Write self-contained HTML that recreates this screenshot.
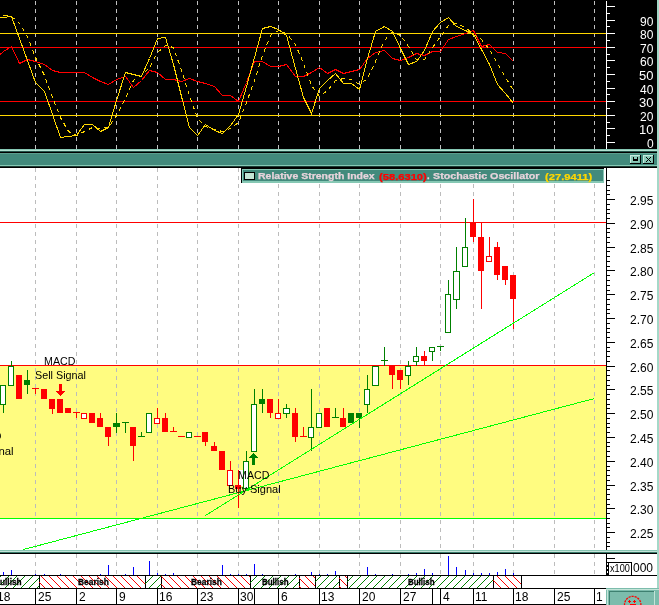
<!DOCTYPE html>
<html><head><meta charset="utf-8"><style>
html,body{margin:0;padding:0;background:#fff;overflow:hidden;}
svg{display:block;will-change:transform;font-family:"Liberation Sans", sans-serif;}
</style></head><body>
<svg width="659" height="605" viewBox="0 0 659 605" shape-rendering="crispEdges">
<rect x="0" y="0" width="659" height="149" fill="#000"/><line x1="35.5" y1="1" x2="35.5" y2="149" stroke="#c0c0c0" stroke-dasharray="4 4"/><line x1="76.5" y1="1" x2="76.5" y2="149" stroke="#c0c0c0" stroke-dasharray="4 4"/><line x1="116.5" y1="1" x2="116.5" y2="149" stroke="#c0c0c0" stroke-dasharray="4 4"/><line x1="157.5" y1="1" x2="157.5" y2="149" stroke="#c0c0c0" stroke-dasharray="4 4"/><line x1="197.5" y1="1" x2="197.5" y2="149" stroke="#c0c0c0" stroke-dasharray="4 4"/><line x1="238.5" y1="1" x2="238.5" y2="149" stroke="#c0c0c0" stroke-dasharray="4 4"/><line x1="278.5" y1="1" x2="278.5" y2="149" stroke="#c0c0c0" stroke-dasharray="4 4"/><line x1="319.5" y1="1" x2="319.5" y2="149" stroke="#c0c0c0" stroke-dasharray="4 4"/><line x1="359.5" y1="1" x2="359.5" y2="149" stroke="#c0c0c0" stroke-dasharray="4 4"/><line x1="400.5" y1="1" x2="400.5" y2="149" stroke="#c0c0c0" stroke-dasharray="4 4"/><line x1="440.5" y1="1" x2="440.5" y2="149" stroke="#c0c0c0" stroke-dasharray="4 4"/><line x1="473.5" y1="1" x2="473.5" y2="149" stroke="#c0c0c0" stroke-dasharray="4 4"/><line x1="513.5" y1="1" x2="513.5" y2="149" stroke="#c0c0c0" stroke-dasharray="4 4"/><line x1="554.5" y1="1" x2="554.5" y2="149" stroke="#c0c0c0" stroke-dasharray="4 4"/><line x1="594.5" y1="1" x2="594.5" y2="149" stroke="#c0c0c0" stroke-dasharray="4 4"/><rect x="0" y="33" width="606" height="1" fill="#ffd700"/><rect x="0" y="115" width="606" height="1" fill="#ffd700"/><rect x="0" y="47" width="606" height="1" fill="#ff0000"/><rect x="0" y="101" width="606" height="1" fill="#ff0000"/><rect x="606" y="1" width="1" height="148" fill="#fff"/><rect x="607" y="142" width="8" height="1" fill="#fff"/><rect x="607" y="135" width="3" height="1" fill="#fff"/><rect x="607" y="128" width="8" height="1" fill="#fff"/><rect x="607" y="122" width="3" height="1" fill="#fff"/><rect x="607" y="115" width="8" height="1" fill="#fff"/><rect x="607" y="108" width="3" height="1" fill="#fff"/><rect x="607" y="101" width="8" height="1" fill="#fff"/><rect x="607" y="94" width="3" height="1" fill="#fff"/><rect x="607" y="88" width="8" height="1" fill="#fff"/><rect x="607" y="81" width="3" height="1" fill="#fff"/><rect x="607" y="74" width="8" height="1" fill="#fff"/><rect x="607" y="67" width="3" height="1" fill="#fff"/><rect x="607" y="60" width="8" height="1" fill="#fff"/><rect x="607" y="54" width="3" height="1" fill="#fff"/><rect x="607" y="47" width="8" height="1" fill="#fff"/><rect x="607" y="40" width="3" height="1" fill="#fff"/><rect x="607" y="33" width="8" height="1" fill="#fff"/><rect x="607" y="26" width="3" height="1" fill="#fff"/><rect x="607" y="20" width="8" height="1" fill="#fff"/><rect x="607" y="13" width="3" height="1" fill="#fff"/><rect x="607" y="6" width="8" height="1" fill="#fff"/><text x="647.00" y="148" font-size="12" font-weight="normal" fill="#fff" textLength="6.69" lengthAdjust="spacingAndGlyphs">0</text><text x="638.92" y="134" font-size="12" font-weight="normal" fill="#fff" textLength="14.47" lengthAdjust="spacingAndGlyphs">10</text><text x="640.00" y="121" font-size="12" font-weight="normal" fill="#fff" textLength="13.36" lengthAdjust="spacingAndGlyphs">20</text><text x="638.92" y="107" font-size="12" font-weight="normal" fill="#fff" textLength="14.47" lengthAdjust="spacingAndGlyphs">30</text><text x="640.00" y="94" font-size="12" font-weight="normal" fill="#fff" textLength="13.36" lengthAdjust="spacingAndGlyphs">40</text><text x="638.92" y="80" font-size="12" font-weight="normal" fill="#fff" textLength="14.47" lengthAdjust="spacingAndGlyphs">50</text><text x="640.00" y="66" font-size="12" font-weight="normal" fill="#fff" textLength="13.36" lengthAdjust="spacingAndGlyphs">60</text><text x="640.00" y="53" font-size="12" font-weight="normal" fill="#fff" textLength="13.36" lengthAdjust="spacingAndGlyphs">70</text><text x="640.00" y="39" font-size="12" font-weight="normal" fill="#fff" textLength="13.36" lengthAdjust="spacingAndGlyphs">80</text><text x="640.00" y="26" font-size="12" font-weight="normal" fill="#fff" textLength="13.36" lengthAdjust="spacingAndGlyphs">90</text><polyline points="-4.5,58.5 3.5,51.5 11.5,46.5 19.5,63.5 27.5,59.5 35.5,61.5 44.5,64.5 52.5,70.5 60.5,72.5 68.5,72.5 76.5,72.5 84.5,72.5 92.5,77.5 100.5,81.5 108.5,84.5 116.5,79.5 125.5,76.5 133.5,87.5 141.5,80.5 149.5,70.5 157.5,72.5 165.5,79.5 173.5,79.5 181.5,81.5 189.5,78.5 197.5,81.5 205.5,83.5 214.5,86.5 222.5,95.5 230.5,95.5 238.5,101.5 246.5,82.5 254.5,61.5 262.5,61.5 270.5,66.5 278.5,66.5 286.5,64.5 295.5,76.5 303.5,76.5 311.5,72.5 319.5,67.5 327.5,73.5 335.5,69.5 343.5,73.5 351.5,71.5 359.5,69.5 367.5,58.5 375.5,52.5 384.5,50.5 392.5,58.5 400.5,60.5 408.5,57.5 416.5,53.5 424.5,55.5 432.5,51.5 440.5,51.5 448.5,39.5 456.5,36.5 465.5,33.5 473.5,30.5 481.5,46.5 489.5,44.5 497.5,52.5 505.5,53.5 513.5,61.5" fill="none" stroke="#ff0000" stroke-width="1"/><polyline points="-4.5,15.5 3.5,15.5 11.5,16.5 19.5,23.5 27.5,36.5 35.5,57.5 44.5,75.5 52.5,97.5 60.5,117.5 68.5,131.5 76.5,135.5 84.5,131.5 92.5,127.5 100.5,128.5 108.5,127.5 116.5,115.5 125.5,98.5 133.5,80.5 141.5,75.5 149.5,67.5 157.5,52.5 165.5,45.5 173.5,47.5 181.5,70.5 189.5,95.5 197.5,118.5 205.5,126.5 214.5,129.5 222.5,131.5 230.5,128.5 238.5,122.5 246.5,102.5 254.5,80.5 262.5,55.5 270.5,35.5 278.5,30.5 286.5,33.5 295.5,44.5 303.5,63.5 311.5,85.5 319.5,96.5 327.5,90.5 335.5,80.5 343.5,78.5 351.5,79.5 359.5,84.5 367.5,78.5 375.5,61.5 384.5,40.5 392.5,31.5 400.5,35.5 408.5,46.5 416.5,59.5 424.5,59.5 432.5,47.5 440.5,36.5 448.5,25.5 456.5,23.5 465.5,27.5 473.5,34.5 481.5,39.5 489.5,49.5 497.5,63.5 505.5,77.5 513.5,90.5" fill="none" stroke="#ffd700" stroke-width="1" stroke-dasharray="4 4"/><polyline points="-4.5,17.5 3.5,17.5 11.5,16.5 19.5,38.5 27.5,60.5 35.5,82.5 44.5,91.5 52.5,114.5 60.5,137.5 68.5,136.5 76.5,135.5 84.5,124.5 92.5,124.5 100.5,131.5 108.5,127.5 116.5,100.5 125.5,72.5 133.5,74.5 141.5,76.5 149.5,58.5 157.5,38.5 165.5,37.5 173.5,64.5 181.5,96.5 189.5,127.5 197.5,135.5 205.5,124.5 214.5,130.5 222.5,133.5 230.5,125.5 238.5,114.5 246.5,86.5 254.5,57.5 262.5,28.5 270.5,26.5 278.5,29.5 286.5,35.5 295.5,68.5 303.5,97.5 311.5,113.5 319.5,88.5 327.5,80.5 335.5,73.5 343.5,83.5 351.5,83.5 359.5,89.5 367.5,58.5 375.5,31.5 384.5,26.5 392.5,31.5 400.5,48.5 408.5,64.5 416.5,61.5 424.5,50.5 432.5,31.5 440.5,22.5 448.5,17.5 456.5,26.5 465.5,30.5 473.5,34.5 481.5,49.5 489.5,64.5 497.5,84.5 505.5,93.5 513.5,103.5" fill="none" stroke="#ffd700" stroke-width="1"/><rect x="0" y="149" width="659" height="1" fill="#86c8b4"/><rect x="0" y="150" width="659" height="1" fill="#b4e2d2"/><rect x="0" y="151" width="659" height="1" fill="#24544a"/><rect x="0" y="152" width="659" height="1" fill="#000"/><rect x="0" y="153" width="659" height="1" fill="#5c9e8e"/><rect x="0" y="154" width="659" height="11" fill="#428a7c"/><rect x="0" y="165" width="659" height="1" fill="#86c8b4"/><rect x="0" y="166" width="659" height="1" fill="#1c3c34"/><rect x="0" y="167" width="659" height="1" fill="#000"/><rect x="630" y="155" width="11" height="9" fill="#000"/><rect x="630" y="155" width="10" height="8" fill="#c8ece0"/><rect x="631" y="156" width="9" height="7" fill="#7cbcac"/><rect x="631" y="156" width="8" height="6" fill="#8ccab8"/><rect x="643" y="155" width="11" height="9" fill="#000"/><rect x="643" y="155" width="10" height="8" fill="#c8ece0"/><rect x="644" y="156" width="9" height="7" fill="#7cbcac"/><rect x="644" y="156" width="8" height="6" fill="#8ccab8"/><rect x="633" y="157" width="1" height="4" fill="#000"/><rect x="637" y="157" width="1" height="4" fill="#000"/><rect x="633" y="160" width="5" height="1" fill="#000"/><rect x="634" y="159" width="3" height="1" fill="#000"/><path d="M646 157 L651 162 M651 157 L646 162" stroke="#000" stroke-width="1" fill="none" shape-rendering="geometricPrecision"/><rect x="0" y="168" width="657" height="382" fill="#fff"/><rect x="0" y="366" width="606" height="152" fill="#fffc80"/><line x1="35.5" y1="168" x2="35.5" y2="550" stroke="#bcbcbc" stroke-dasharray="4 4"/><line x1="76.5" y1="168" x2="76.5" y2="550" stroke="#bcbcbc" stroke-dasharray="4 4"/><line x1="116.5" y1="168" x2="116.5" y2="550" stroke="#bcbcbc" stroke-dasharray="4 4"/><line x1="157.5" y1="168" x2="157.5" y2="550" stroke="#bcbcbc" stroke-dasharray="4 4"/><line x1="197.5" y1="168" x2="197.5" y2="550" stroke="#bcbcbc" stroke-dasharray="4 4"/><line x1="238.5" y1="168" x2="238.5" y2="550" stroke="#bcbcbc" stroke-dasharray="4 4"/><line x1="278.5" y1="168" x2="278.5" y2="550" stroke="#bcbcbc" stroke-dasharray="4 4"/><line x1="319.5" y1="168" x2="319.5" y2="550" stroke="#bcbcbc" stroke-dasharray="4 4"/><line x1="359.5" y1="168" x2="359.5" y2="550" stroke="#bcbcbc" stroke-dasharray="4 4"/><line x1="400.5" y1="168" x2="400.5" y2="550" stroke="#bcbcbc" stroke-dasharray="4 4"/><line x1="440.5" y1="168" x2="440.5" y2="550" stroke="#bcbcbc" stroke-dasharray="4 4"/><line x1="473.5" y1="168" x2="473.5" y2="550" stroke="#bcbcbc" stroke-dasharray="4 4"/><line x1="513.5" y1="168" x2="513.5" y2="550" stroke="#bcbcbc" stroke-dasharray="4 4"/><line x1="554.5" y1="168" x2="554.5" y2="550" stroke="#bcbcbc" stroke-dasharray="4 4"/><line x1="594.5" y1="168" x2="594.5" y2="550" stroke="#bcbcbc" stroke-dasharray="4 4"/><rect x="0" y="222" width="606" height="1" fill="#ff0000"/><rect x="0" y="365" width="606" height="1" fill="#ff0000"/><rect x="0" y="518" width="606" height="1" fill="#00ff00"/><rect x="3" y="404" width="1" height="9" fill="#008000"/><rect x="0" y="385" width="6" height="20" fill="#008000"/><rect x="1" y="386" width="4" height="18" fill="#fff"/><rect x="11" y="361" width="1" height="6" fill="#008000"/><rect x="8" y="366" width="6" height="20" fill="#008000"/><rect x="9" y="367" width="4" height="18" fill="#fff"/><rect x="16" y="375" width="6" height="24" fill="#ff0000"/><rect x="27" y="370" width="1" height="11" fill="#008000"/><rect x="27" y="384" width="1" height="10" fill="#008000"/><rect x="24" y="380" width="6" height="5" fill="#008000"/><rect x="32" y="388" width="7" height="1" fill="#ff0000"/><rect x="35" y="388" width="1" height="6" fill="#ff0000"/><rect x="41" y="389" width="6" height="10" fill="#ff0000"/><rect x="52" y="408" width="1" height="6" fill="#ff0000"/><rect x="49" y="399" width="6" height="10" fill="#ff0000"/><rect x="57" y="399" width="6" height="14" fill="#ff0000"/><rect x="65" y="408" width="6" height="5" fill="#ff0000"/><rect x="73" y="412" width="7" height="1" fill="#ff0000"/><rect x="76" y="412" width="1" height="6" fill="#ff0000"/><rect x="81" y="413" width="6" height="6" fill="#ff0000"/><rect x="82" y="414" width="4" height="4" fill="#fff"/><rect x="89" y="413" width="6" height="10" fill="#ff0000"/><rect x="100" y="413" width="1" height="6" fill="#ff0000"/><rect x="97" y="418" width="6" height="9" fill="#ff0000"/><rect x="108" y="436" width="1" height="10" fill="#ff0000"/><rect x="105" y="427" width="6" height="10" fill="#ff0000"/><rect x="116" y="413" width="1" height="11" fill="#008000"/><rect x="116" y="426" width="1" height="7" fill="#008000"/><rect x="113" y="423" width="7" height="4" fill="#008000"/><rect x="122" y="422" width="7" height="1" fill="#008000"/><rect x="125" y="422" width="1" height="11" fill="#008000"/><rect x="133" y="445" width="1" height="16" fill="#ff0000"/><rect x="130" y="427" width="6" height="19" fill="#ff0000"/><rect x="138" y="436" width="7" height="1" fill="#008000"/><rect x="141" y="432" width="1" height="5" fill="#008000"/><rect x="146" y="413" width="6" height="20" fill="#008000"/><rect x="147" y="414" width="4" height="18" fill="#fff"/><rect x="157" y="408" width="1" height="11" fill="#ff0000"/><rect x="154" y="418" width="6" height="6" fill="#ff0000"/><rect x="155" y="419" width="4" height="4" fill="#fff"/><rect x="165" y="413" width="1" height="6" fill="#ff0000"/><rect x="162" y="418" width="6" height="14" fill="#ff0000"/><rect x="170" y="431" width="7" height="1" fill="#ff0000"/><rect x="173" y="427" width="1" height="5" fill="#ff0000"/><rect x="178" y="436" width="7" height="1" fill="#ff0000"/><rect x="181" y="436" width="1" height="1" fill="#ff0000"/><rect x="186" y="432" width="6" height="6" fill="#008000"/><rect x="187" y="433" width="4" height="4" fill="#fff"/><rect x="194" y="436" width="7" height="1" fill="#ff0000"/><rect x="197" y="436" width="1" height="1" fill="#ff0000"/><rect x="205" y="441" width="1" height="5" fill="#ff0000"/><rect x="202" y="432" width="6" height="10" fill="#ff0000"/><rect x="214" y="442" width="1" height="5" fill="#ff0000"/><rect x="211" y="446" width="6" height="5" fill="#ff0000"/><rect x="219" y="451" width="6" height="19" fill="#ff0000"/><rect x="230" y="461" width="1" height="10" fill="#ff0000"/><rect x="227" y="470" width="6" height="16" fill="#ff0000"/><rect x="228" y="471" width="4" height="14" fill="#fff"/><rect x="246" y="451" width="1" height="11" fill="#008000"/><rect x="243" y="461" width="6" height="28" fill="#008000"/><rect x="244" y="462" width="4" height="26" fill="#fff"/><rect x="254" y="389" width="1" height="16" fill="#008000"/><rect x="251" y="404" width="6" height="48" fill="#008000"/><rect x="252" y="405" width="4" height="46" fill="#fff"/><rect x="262" y="389" width="1" height="11" fill="#008000"/><rect x="262" y="403" width="1" height="10" fill="#008000"/><rect x="259" y="399" width="6" height="5" fill="#008000"/><rect x="270" y="412" width="1" height="6" fill="#ff0000"/><rect x="267" y="399" width="6" height="14" fill="#ff0000"/><rect x="278" y="399" width="1" height="15" fill="#ff0000"/><rect x="275" y="413" width="6" height="6" fill="#ff0000"/><rect x="276" y="414" width="4" height="4" fill="#fff"/><rect x="286" y="404" width="1" height="5" fill="#008000"/><rect x="286" y="413" width="1" height="5" fill="#008000"/><rect x="283" y="408" width="7" height="6" fill="#008000"/><rect x="284" y="409" width="5" height="4" fill="#fff"/><rect x="295" y="408" width="1" height="6" fill="#ff0000"/><rect x="295" y="436" width="1" height="6" fill="#ff0000"/><rect x="292" y="413" width="6" height="24" fill="#ff0000"/><rect x="300" y="436" width="7" height="1" fill="#ff0000"/><rect x="303" y="427" width="1" height="10" fill="#ff0000"/><rect x="311" y="389" width="1" height="39" fill="#008000"/><rect x="311" y="437" width="1" height="14" fill="#008000"/><rect x="308" y="427" width="6" height="11" fill="#008000"/><rect x="309" y="428" width="4" height="9" fill="#fff"/><rect x="316" y="413" width="6" height="15" fill="#008000"/><rect x="317" y="414" width="4" height="13" fill="#fff"/><rect x="324" y="408" width="6" height="19" fill="#ff0000"/><rect x="332" y="417" width="7" height="1" fill="#008000"/><rect x="335" y="408" width="1" height="10" fill="#008000"/><rect x="343" y="408" width="1" height="11" fill="#ff0000"/><rect x="340" y="418" width="6" height="9" fill="#ff0000"/><rect x="348" y="413" width="6" height="10" fill="#008000"/><rect x="359" y="417" width="1" height="11" fill="#008000"/><rect x="356" y="413" width="6" height="5" fill="#008000"/><rect x="367" y="375" width="1" height="15" fill="#008000"/><rect x="367" y="404" width="1" height="9" fill="#008000"/><rect x="364" y="389" width="6" height="16" fill="#008000"/><rect x="365" y="390" width="4" height="14" fill="#fff"/><rect x="372" y="366" width="7" height="20" fill="#008000"/><rect x="373" y="367" width="5" height="18" fill="#fff"/><rect x="381" y="360" width="7" height="1" fill="#008000"/><rect x="384" y="347" width="1" height="19" fill="#008000"/><rect x="392" y="374" width="1" height="15" fill="#ff0000"/><rect x="389" y="365" width="6" height="10" fill="#ff0000"/><rect x="400" y="379" width="1" height="10" fill="#ff0000"/><rect x="397" y="370" width="6" height="10" fill="#ff0000"/><rect x="408" y="361" width="1" height="6" fill="#008000"/><rect x="408" y="375" width="1" height="10" fill="#008000"/><rect x="405" y="366" width="6" height="10" fill="#008000"/><rect x="406" y="367" width="4" height="8" fill="#fff"/><rect x="416" y="347" width="1" height="10" fill="#008000"/><rect x="416" y="361" width="1" height="5" fill="#008000"/><rect x="413" y="356" width="6" height="6" fill="#008000"/><rect x="414" y="357" width="4" height="4" fill="#fff"/><rect x="424" y="351" width="1" height="6" fill="#ff0000"/><rect x="424" y="360" width="1" height="6" fill="#ff0000"/><rect x="421" y="356" width="6" height="5" fill="#ff0000"/><rect x="432" y="351" width="1" height="10" fill="#008000"/><rect x="429" y="347" width="6" height="5" fill="#008000"/><rect x="430" y="348" width="4" height="3" fill="#fff"/><rect x="437" y="346" width="7" height="1" fill="#008000"/><rect x="440" y="346" width="1" height="5" fill="#008000"/><rect x="448" y="280" width="1" height="15" fill="#008000"/><rect x="445" y="294" width="6" height="39" fill="#008000"/><rect x="446" y="295" width="4" height="37" fill="#fff"/><rect x="456" y="247" width="1" height="25" fill="#008000"/><rect x="456" y="299" width="1" height="10" fill="#008000"/><rect x="453" y="271" width="7" height="29" fill="#008000"/><rect x="454" y="272" width="5" height="27" fill="#fff"/><rect x="465" y="218" width="1" height="30" fill="#008000"/><rect x="462" y="247" width="6" height="20" fill="#008000"/><rect x="463" y="248" width="4" height="18" fill="#fff"/><rect x="473" y="199" width="1" height="24" fill="#ff0000"/><rect x="473" y="236" width="1" height="6" fill="#ff0000"/><rect x="470" y="222" width="6" height="15" fill="#ff0000"/><rect x="481" y="222" width="1" height="16" fill="#ff0000"/><rect x="481" y="270" width="1" height="39" fill="#ff0000"/><rect x="478" y="237" width="6" height="34" fill="#ff0000"/><rect x="489" y="237" width="1" height="20" fill="#ff0000"/><rect x="486" y="256" width="6" height="6" fill="#ff0000"/><rect x="487" y="257" width="4" height="4" fill="#fff"/><rect x="497" y="242" width="1" height="6" fill="#ff0000"/><rect x="497" y="274" width="1" height="6" fill="#ff0000"/><rect x="494" y="247" width="6" height="28" fill="#ff0000"/><rect x="505" y="279" width="1" height="6" fill="#ff0000"/><rect x="502" y="266" width="6" height="14" fill="#ff0000"/><rect x="513" y="298" width="1" height="31" fill="#ff0000"/><rect x="510" y="275" width="6" height="24" fill="#ff0000"/><rect x="239" y="470" width="4" height="16" fill="#fff"/><rect x="238" y="470" width="1" height="38" fill="#ff0000"/><rect x="235" y="485" width="6" height="4" fill="#ff0000"/><line x1="205.5" y1="515.5" x2="594.5" y2="272.5" stroke="#00ff00" stroke-width="1"/><line x1="23.5" y1="549.5" x2="594.5" y2="398.5" stroke="#00ff00" stroke-width="1"/><path d="M59 384h3v7h3l-4.5 5.5l-4.5-5.5h3z" fill="#ff0000" shape-rendering="crispEdges"/><path d="M252 465h3v-7h3l-4.5-5.5l-4.5 5.5h3z" fill="#008000" shape-rendering="crispEdges"/><text x="44.03" y="365" font-size="11" font-weight="normal" fill="#000" textLength="31.35" lengthAdjust="spacingAndGlyphs">MACD</text><text x="35.02" y="379" font-size="11" font-weight="normal" fill="#000" textLength="50.94" lengthAdjust="spacingAndGlyphs">Sell Signal</text><text x="238.03" y="479" font-size="11" font-weight="normal" fill="#000" textLength="31.35" lengthAdjust="spacingAndGlyphs">MACD</text><text x="228.00" y="493" font-size="11" font-weight="normal" fill="#000" textLength="52.59" lengthAdjust="spacingAndGlyphs">Buy Signal</text><text x="-29.97" y="440" font-size="11" font-weight="normal" fill="#000" textLength="31.35" lengthAdjust="spacingAndGlyphs">MACD</text><text x="-18.03" y="455" font-size="11" font-weight="normal" fill="#000" textLength="31.63" lengthAdjust="spacingAndGlyphs">Signal</text><rect x="606" y="168" width="1" height="382" fill="#000"/><rect x="607" y="546" width="3" height="1" fill="#000"/><rect x="607" y="542" width="3" height="1" fill="#000"/><rect x="607" y="537" width="3" height="1" fill="#000"/><rect x="607" y="532" width="8" height="1" fill="#000"/><rect x="607" y="527" width="3" height="1" fill="#000"/><rect x="607" y="523" width="3" height="1" fill="#000"/><rect x="607" y="518" width="3" height="1" fill="#000"/><rect x="607" y="513" width="3" height="1" fill="#000"/><rect x="607" y="508" width="8" height="1" fill="#000"/><rect x="607" y="504" width="3" height="1" fill="#000"/><rect x="607" y="499" width="3" height="1" fill="#000"/><rect x="607" y="494" width="3" height="1" fill="#000"/><rect x="607" y="489" width="3" height="1" fill="#000"/><rect x="607" y="485" width="8" height="1" fill="#000"/><rect x="607" y="480" width="3" height="1" fill="#000"/><rect x="607" y="475" width="3" height="1" fill="#000"/><rect x="607" y="470" width="3" height="1" fill="#000"/><rect x="607" y="466" width="3" height="1" fill="#000"/><rect x="607" y="461" width="8" height="1" fill="#000"/><rect x="607" y="456" width="3" height="1" fill="#000"/><rect x="607" y="451" width="3" height="1" fill="#000"/><rect x="607" y="446" width="3" height="1" fill="#000"/><rect x="607" y="442" width="3" height="1" fill="#000"/><rect x="607" y="437" width="8" height="1" fill="#000"/><rect x="607" y="432" width="3" height="1" fill="#000"/><rect x="607" y="427" width="3" height="1" fill="#000"/><rect x="607" y="423" width="3" height="1" fill="#000"/><rect x="607" y="418" width="3" height="1" fill="#000"/><rect x="607" y="413" width="8" height="1" fill="#000"/><rect x="607" y="408" width="3" height="1" fill="#000"/><rect x="607" y="404" width="3" height="1" fill="#000"/><rect x="607" y="399" width="3" height="1" fill="#000"/><rect x="607" y="394" width="3" height="1" fill="#000"/><rect x="607" y="389" width="8" height="1" fill="#000"/><rect x="607" y="385" width="3" height="1" fill="#000"/><rect x="607" y="380" width="3" height="1" fill="#000"/><rect x="607" y="375" width="3" height="1" fill="#000"/><rect x="607" y="370" width="3" height="1" fill="#000"/><rect x="607" y="366" width="8" height="1" fill="#000"/><rect x="607" y="361" width="3" height="1" fill="#000"/><rect x="607" y="356" width="3" height="1" fill="#000"/><rect x="607" y="351" width="3" height="1" fill="#000"/><rect x="607" y="347" width="3" height="1" fill="#000"/><rect x="607" y="342" width="8" height="1" fill="#000"/><rect x="607" y="337" width="3" height="1" fill="#000"/><rect x="607" y="332" width="3" height="1" fill="#000"/><rect x="607" y="328" width="3" height="1" fill="#000"/><rect x="607" y="323" width="3" height="1" fill="#000"/><rect x="607" y="318" width="8" height="1" fill="#000"/><rect x="607" y="313" width="3" height="1" fill="#000"/><rect x="607" y="309" width="3" height="1" fill="#000"/><rect x="607" y="304" width="3" height="1" fill="#000"/><rect x="607" y="299" width="3" height="1" fill="#000"/><rect x="607" y="294" width="8" height="1" fill="#000"/><rect x="607" y="290" width="3" height="1" fill="#000"/><rect x="607" y="285" width="3" height="1" fill="#000"/><rect x="607" y="280" width="3" height="1" fill="#000"/><rect x="607" y="275" width="3" height="1" fill="#000"/><rect x="607" y="270" width="8" height="1" fill="#000"/><rect x="607" y="266" width="3" height="1" fill="#000"/><rect x="607" y="261" width="3" height="1" fill="#000"/><rect x="607" y="256" width="3" height="1" fill="#000"/><rect x="607" y="251" width="3" height="1" fill="#000"/><rect x="607" y="247" width="8" height="1" fill="#000"/><rect x="607" y="242" width="3" height="1" fill="#000"/><rect x="607" y="237" width="3" height="1" fill="#000"/><rect x="607" y="232" width="3" height="1" fill="#000"/><rect x="607" y="228" width="3" height="1" fill="#000"/><rect x="607" y="223" width="8" height="1" fill="#000"/><rect x="607" y="218" width="3" height="1" fill="#000"/><rect x="607" y="213" width="3" height="1" fill="#000"/><rect x="607" y="209" width="3" height="1" fill="#000"/><rect x="607" y="204" width="3" height="1" fill="#000"/><rect x="607" y="199" width="8" height="1" fill="#000"/><rect x="607" y="194" width="3" height="1" fill="#000"/><rect x="607" y="190" width="3" height="1" fill="#000"/><rect x="607" y="185" width="3" height="1" fill="#000"/><rect x="607" y="180" width="3" height="1" fill="#000"/><text x="630.00" y="205" font-size="12" font-weight="normal" fill="#000" textLength="23.36" lengthAdjust="spacingAndGlyphs">2.95</text><text x="630.00" y="229" font-size="12" font-weight="normal" fill="#000" textLength="23.36" lengthAdjust="spacingAndGlyphs">2.90</text><text x="630.00" y="253" font-size="12" font-weight="normal" fill="#000" textLength="23.36" lengthAdjust="spacingAndGlyphs">2.85</text><text x="630.00" y="276" font-size="12" font-weight="normal" fill="#000" textLength="23.36" lengthAdjust="spacingAndGlyphs">2.80</text><text x="630.00" y="300" font-size="12" font-weight="normal" fill="#000" textLength="23.36" lengthAdjust="spacingAndGlyphs">2.75</text><text x="630.00" y="324" font-size="12" font-weight="normal" fill="#000" textLength="23.36" lengthAdjust="spacingAndGlyphs">2.70</text><text x="630.00" y="348" font-size="12" font-weight="normal" fill="#000" textLength="23.36" lengthAdjust="spacingAndGlyphs">2.65</text><text x="630.00" y="372" font-size="12" font-weight="normal" fill="#000" textLength="23.36" lengthAdjust="spacingAndGlyphs">2.60</text><text x="630.00" y="395" font-size="12" font-weight="normal" fill="#000" textLength="23.36" lengthAdjust="spacingAndGlyphs">2.55</text><text x="630.00" y="419" font-size="12" font-weight="normal" fill="#000" textLength="23.36" lengthAdjust="spacingAndGlyphs">2.50</text><text x="630.00" y="443" font-size="12" font-weight="normal" fill="#000" textLength="23.36" lengthAdjust="spacingAndGlyphs">2.45</text><text x="630.00" y="467" font-size="12" font-weight="normal" fill="#000" textLength="23.36" lengthAdjust="spacingAndGlyphs">2.40</text><text x="630.00" y="491" font-size="12" font-weight="normal" fill="#000" textLength="23.36" lengthAdjust="spacingAndGlyphs">2.35</text><text x="630.00" y="514" font-size="12" font-weight="normal" fill="#000" textLength="23.36" lengthAdjust="spacingAndGlyphs">2.30</text><text x="630.00" y="538" font-size="12" font-weight="normal" fill="#000" textLength="23.36" lengthAdjust="spacingAndGlyphs">2.25</text><rect x="241" y="167" width="363" height="16" fill="#000"/><rect x="242" y="169" width="362" height="14" fill="#86c8b4"/><rect x="243" y="170" width="360" height="11" fill="#428a7c"/><rect x="244" y="172" width="11" height="8" fill="#000"/><rect x="245" y="173" width="9" height="6" fill="#c4e4d4"/><text x="258.00" y="179" font-size="9.5" font-weight="bold" fill="#e8d4dc" textLength="116.66" lengthAdjust="spacingAndGlyphs" stroke="#e8d4dc" stroke-width="0.25">Relative Strength Index</text><text x="379.00" y="180" font-size="9.5" font-weight="bold" fill="#ff0000" textLength="47.79" lengthAdjust="spacingAndGlyphs" stroke="#ff0000" stroke-width="0.25">(58.6310)</text><text x="427.00" y="179" font-size="9.5" font-weight="bold" fill="#e8d4dc" stroke="#e8d4dc" stroke-width="0.25">.</text><text x="433.00" y="179" font-size="9.5" font-weight="bold" fill="#e8d4dc" textLength="106.45" lengthAdjust="spacingAndGlyphs" stroke="#e8d4dc" stroke-width="0.25">Stochastic Oscillator</text><text x="545.00" y="180" font-size="9.5" font-weight="bold" fill="#ffd700" textLength="47.18" lengthAdjust="spacingAndGlyphs" stroke="#ffd700" stroke-width="0.25">(27.9411)</text><rect x="0" y="550" width="659" height="1" fill="#86c4b2"/><rect x="0" y="551" width="659" height="1" fill="#c4e4d8"/><rect x="0" y="552" width="659" height="1" fill="#3a7a6a"/><rect x="0" y="553" width="659" height="1" fill="#000"/><rect x="0" y="554" width="657" height="21" fill="#fff"/><line x1="35.5" y1="554" x2="35.5" y2="575" stroke="#bcbcbc" stroke-dasharray="4 4"/><line x1="76.5" y1="554" x2="76.5" y2="575" stroke="#bcbcbc" stroke-dasharray="4 4"/><line x1="116.5" y1="554" x2="116.5" y2="575" stroke="#bcbcbc" stroke-dasharray="4 4"/><line x1="157.5" y1="554" x2="157.5" y2="575" stroke="#bcbcbc" stroke-dasharray="4 4"/><line x1="197.5" y1="554" x2="197.5" y2="575" stroke="#bcbcbc" stroke-dasharray="4 4"/><line x1="238.5" y1="554" x2="238.5" y2="575" stroke="#bcbcbc" stroke-dasharray="4 4"/><line x1="278.5" y1="554" x2="278.5" y2="575" stroke="#bcbcbc" stroke-dasharray="4 4"/><line x1="319.5" y1="554" x2="319.5" y2="575" stroke="#bcbcbc" stroke-dasharray="4 4"/><line x1="359.5" y1="554" x2="359.5" y2="575" stroke="#bcbcbc" stroke-dasharray="4 4"/><line x1="400.5" y1="554" x2="400.5" y2="575" stroke="#bcbcbc" stroke-dasharray="4 4"/><line x1="440.5" y1="554" x2="440.5" y2="575" stroke="#bcbcbc" stroke-dasharray="4 4"/><line x1="473.5" y1="554" x2="473.5" y2="575" stroke="#bcbcbc" stroke-dasharray="4 4"/><line x1="513.5" y1="554" x2="513.5" y2="575" stroke="#bcbcbc" stroke-dasharray="4 4"/><line x1="554.5" y1="554" x2="554.5" y2="575" stroke="#bcbcbc" stroke-dasharray="4 4"/><line x1="594.5" y1="554" x2="594.5" y2="575" stroke="#bcbcbc" stroke-dasharray="4 4"/><rect x="3" y="572" width="1" height="3" fill="#0000ff"/><rect x="11" y="570" width="1" height="5" fill="#0000ff"/><rect x="35" y="574" width="1" height="1" fill="#0000ff"/><rect x="44" y="574" width="1" height="1" fill="#0000ff"/><rect x="60" y="574" width="1" height="1" fill="#0000ff"/><rect x="100" y="574" width="1" height="1" fill="#0000ff"/><rect x="108" y="565" width="1" height="10" fill="#0000ff"/><rect x="125" y="574" width="1" height="1" fill="#0000ff"/><rect x="133" y="567" width="1" height="8" fill="#0000ff"/><rect x="149" y="561" width="1" height="14" fill="#0000ff"/><rect x="157" y="573" width="1" height="2" fill="#0000ff"/><rect x="165" y="574" width="1" height="1" fill="#0000ff"/><rect x="173" y="573" width="1" height="2" fill="#0000ff"/><rect x="222" y="565" width="1" height="10" fill="#0000ff"/><rect x="230" y="574" width="1" height="1" fill="#0000ff"/><rect x="238" y="574" width="1" height="1" fill="#0000ff"/><rect x="246" y="574" width="1" height="1" fill="#0000ff"/><rect x="254" y="564" width="1" height="11" fill="#0000ff"/><rect x="262" y="574" width="1" height="1" fill="#0000ff"/><rect x="295" y="574" width="1" height="1" fill="#0000ff"/><rect x="311" y="572" width="1" height="3" fill="#0000ff"/><rect x="319" y="574" width="1" height="1" fill="#0000ff"/><rect x="327" y="574" width="1" height="1" fill="#0000ff"/><rect x="335" y="571" width="1" height="4" fill="#0000ff"/><rect x="367" y="567" width="1" height="8" fill="#0000ff"/><rect x="375" y="574" width="1" height="1" fill="#0000ff"/><rect x="392" y="574" width="1" height="1" fill="#0000ff"/><rect x="408" y="574" width="1" height="1" fill="#0000ff"/><rect x="416" y="573" width="1" height="2" fill="#0000ff"/><rect x="424" y="569" width="1" height="6" fill="#0000ff"/><rect x="432" y="573" width="1" height="2" fill="#0000ff"/><rect x="448" y="556" width="1" height="19" fill="#0000ff"/><rect x="456" y="567" width="1" height="8" fill="#0000ff"/><rect x="465" y="570" width="1" height="5" fill="#0000ff"/><rect x="473" y="573" width="1" height="2" fill="#0000ff"/><rect x="481" y="573" width="1" height="2" fill="#0000ff"/><rect x="489" y="573" width="1" height="2" fill="#0000ff"/><rect x="497" y="572" width="1" height="3" fill="#0000ff"/><rect x="505" y="569" width="1" height="6" fill="#0000ff"/><rect x="513" y="573" width="1" height="2" fill="#0000ff"/><rect x="606" y="554" width="1" height="21" fill="#000"/><rect x="607" y="558" width="8" height="1" fill="#000"/><rect x="607" y="562" width="25" height="14" fill="#000"/><rect x="609" y="563" width="22" height="12" fill="#fff"/><rect x="607" y="563" width="1" height="2" fill="#fff"/><rect x="607" y="567" width="1" height="2" fill="#fff"/><rect x="607" y="571" width="1" height="2" fill="#fff"/><text x="610.00" y="572" font-size="11" font-weight="normal" fill="#000" textLength="19.88" lengthAdjust="spacingAndGlyphs">x100</text><text x="633.00" y="572" font-size="12" font-weight="normal" fill="#000" textLength="20.03" lengthAdjust="spacingAndGlyphs">000</text><rect x="0" y="575" width="657" height="1" fill="#000"/><defs><pattern id="pg" patternUnits="userSpaceOnUse" width="8" height="8"><rect x="0" y="0" width="1" height="1" fill="#008000"/><rect x="1" y="7" width="1" height="1" fill="#008000"/><rect x="2" y="6" width="1" height="1" fill="#008000"/><rect x="3" y="5" width="1" height="1" fill="#008000"/><rect x="4" y="4" width="1" height="1" fill="#008000"/><rect x="5" y="3" width="1" height="1" fill="#008000"/><rect x="6" y="2" width="1" height="1" fill="#008000"/><rect x="7" y="1" width="1" height="1" fill="#008000"/></pattern><pattern id="pr" patternUnits="userSpaceOnUse" width="8" height="8"><rect x="1" y="0" width="1" height="1" fill="#ff0000"/><rect x="2" y="1" width="1" height="1" fill="#ff0000"/><rect x="3" y="2" width="1" height="1" fill="#ff0000"/><rect x="4" y="3" width="1" height="1" fill="#ff0000"/><rect x="5" y="4" width="1" height="1" fill="#ff0000"/><rect x="6" y="5" width="1" height="1" fill="#ff0000"/><rect x="7" y="6" width="1" height="1" fill="#ff0000"/><rect x="0" y="7" width="1" height="1" fill="#ff0000"/></pattern></defs><rect x="0" y="576" width="657" height="12" fill="#fff"/><rect x="0" y="576" width="39" height="12" fill="url(#pg)"/><rect x="39" y="576" width="1" height="12" fill="#000"/><rect x="39" y="576" width="106" height="12" fill="url(#pr)"/><rect x="145" y="576" width="1" height="12" fill="#000"/><rect x="145" y="576" width="16" height="12" fill="url(#pg)"/><rect x="161" y="576" width="1" height="12" fill="#000"/><rect x="161" y="576" width="89" height="12" fill="url(#pr)"/><rect x="250" y="576" width="1" height="12" fill="#000"/><rect x="250" y="576" width="49" height="12" fill="url(#pg)"/><rect x="299" y="576" width="1" height="12" fill="#000"/><rect x="299" y="576" width="16" height="12" fill="url(#pr)"/><rect x="315" y="576" width="1" height="12" fill="#000"/><rect x="315" y="576" width="24" height="12" fill="url(#pg)"/><rect x="339" y="576" width="1" height="12" fill="#000"/><rect x="339" y="576" width="8" height="12" fill="url(#pr)"/><rect x="347" y="576" width="1" height="12" fill="#000"/><rect x="347" y="576" width="146" height="12" fill="url(#pg)"/><rect x="493" y="576" width="1" height="12" fill="#000"/><rect x="493" y="576" width="28" height="12" fill="url(#pr)"/><rect x="521" y="576" width="1" height="12" fill="#000"/><text x="-6.00" y="585" font-size="9.5" font-weight="bold" fill="#000" textLength="27.59" lengthAdjust="spacingAndGlyphs" stroke="#000" stroke-width="0.3">Bullish</text><text x="78.00" y="585" font-size="9.5" font-weight="bold" fill="#000" textLength="30.76" lengthAdjust="spacingAndGlyphs" stroke="#000" stroke-width="0.3">Bearish</text><text x="191.00" y="585" font-size="9.5" font-weight="bold" fill="#000" textLength="30.76" lengthAdjust="spacingAndGlyphs" stroke="#000" stroke-width="0.3">Bearish</text><text x="262.00" y="585" font-size="9.5" font-weight="bold" fill="#000" textLength="26.56" lengthAdjust="spacingAndGlyphs" stroke="#000" stroke-width="0.3">Bullish</text><text x="408.00" y="585" font-size="9.5" font-weight="bold" fill="#000" textLength="26.56" lengthAdjust="spacingAndGlyphs" stroke="#000" stroke-width="0.3">Bullish</text><rect x="606" y="576" width="1" height="12" fill="#fff"/><rect x="0" y="588" width="606" height="1" fill="#000"/><rect x="657" y="0" width="2" height="588" fill="#a4d8c8"/><rect x="0" y="589" width="606" height="15" fill="#fff"/><rect x="0" y="604" width="606" height="1" fill="#000"/><text x="-3.00" y="601" font-size="12" font-weight="normal" fill="#000">18</text><rect x="35" y="589" width="1" height="15" fill="#000"/><text x="38.00" y="601" font-size="12" font-weight="normal" fill="#000">25</text><rect x="76" y="589" width="1" height="15" fill="#000"/><text x="79.00" y="601" font-size="12" font-weight="normal" fill="#000">2</text><rect x="116" y="589" width="1" height="15" fill="#000"/><text x="119.00" y="601" font-size="12" font-weight="normal" fill="#000">9</text><rect x="157" y="589" width="1" height="15" fill="#000"/><text x="159.00" y="601" font-size="12" font-weight="normal" fill="#000">16</text><rect x="197" y="589" width="1" height="15" fill="#000"/><text x="200.00" y="601" font-size="12" font-weight="normal" fill="#000">23</text><rect x="238" y="589" width="1" height="15" fill="#000"/><text x="240.00" y="601" font-size="12" font-weight="normal" fill="#000">30</text><rect x="254" y="589" width="1" height="15" fill="#000"/><rect x="278" y="589" width="1" height="15" fill="#000"/><text x="281.00" y="601" font-size="12" font-weight="normal" fill="#000">6</text><rect x="319" y="589" width="1" height="15" fill="#000"/><text x="321.00" y="601" font-size="12" font-weight="normal" fill="#000">13</text><rect x="359" y="589" width="1" height="15" fill="#000"/><text x="362.00" y="601" font-size="12" font-weight="normal" fill="#000">20</text><rect x="400" y="589" width="1" height="15" fill="#000"/><text x="403.00" y="601" font-size="12" font-weight="normal" fill="#000">27</text><rect x="432" y="589" width="1" height="15" fill="#000"/><rect x="440" y="589" width="1" height="15" fill="#000"/><text x="443.00" y="601" font-size="12" font-weight="normal" fill="#000">4</text><rect x="473" y="589" width="1" height="15" fill="#000"/><text x="475.00" y="601" font-size="12" font-weight="normal" fill="#000">11</text><rect x="513" y="589" width="1" height="15" fill="#000"/><text x="515.00" y="601" font-size="12" font-weight="normal" fill="#000">18</text><rect x="554" y="589" width="1" height="15" fill="#000"/><text x="557.00" y="601" font-size="12" font-weight="normal" fill="#000">25</text><rect x="594" y="589" width="1" height="15" fill="#000"/><text x="596.00" y="601" font-size="12" font-weight="normal" fill="#000">1</text><rect x="606" y="588" width="53" height="17" fill="#7cbcac"/><rect x="606" y="589" width="53" height="1" fill="#c4e4d8"/><rect x="607" y="589" width="1" height="16" fill="#c4e4d8"/><rect x="609" y="591" width="45" height="1" fill="#3e8070"/><rect x="609" y="591" width="1" height="14" fill="#3e8070"/><rect x="654" y="591" width="1" height="14" fill="#c4e4d8"/><circle cx="632.7" cy="604.6" r="8.2" fill="none" stroke="#ff0000" stroke-width="1.3" stroke-dasharray="2.2 0.9" shape-rendering="geometricPrecision"/><path d="M629.5 600v3M628 601.5h3M634.5 600v3M633 601.5h3" stroke="#ff0000" stroke-width="1.2" fill="none"/><rect x="630" y="604" width="6" height="1" fill="#ff0000"/>
</svg></body></html>
